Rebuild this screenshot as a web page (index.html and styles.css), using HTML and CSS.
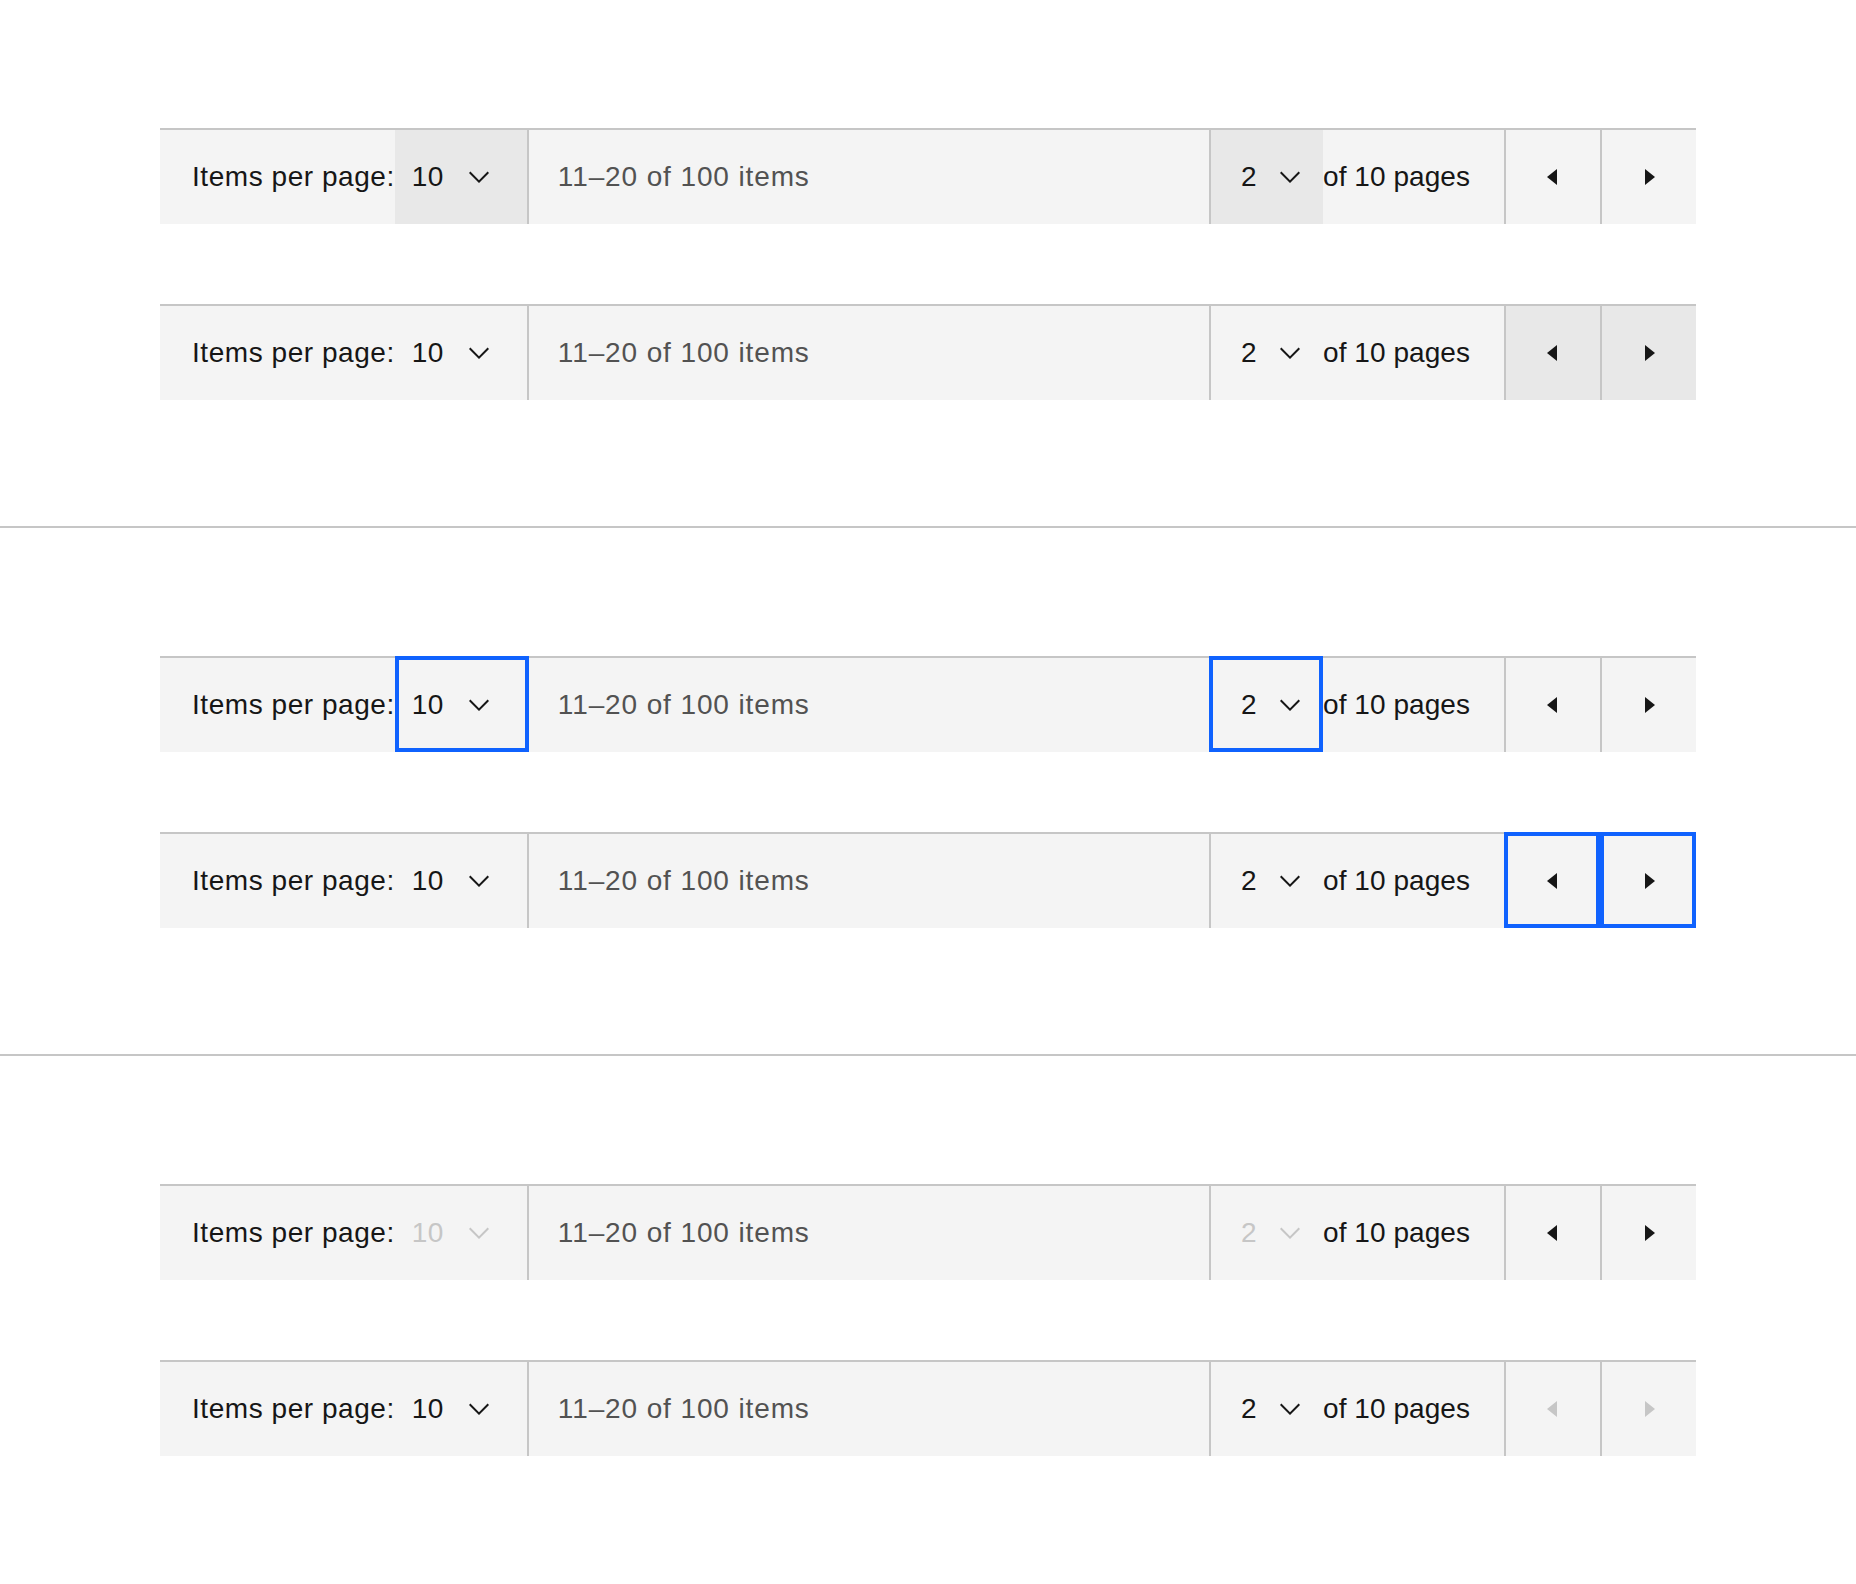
FILE: index.html
```html
<!DOCTYPE html>
<html lang="en">
<head>
<meta charset="utf-8">
<title>Pagination states</title>
<link rel="stylesheet" href="styles.css">
</head>
<body>
<svg width="0" height="0" class="defs" aria-hidden="true">
  <defs>
    <symbol id="chev" viewBox="0 0 16 16"><path d="M8 11L3 6 3.7 5.3 8 9.6 12.3 5.3 13 6z"/></symbol>
    <symbol id="caret-l" viewBox="0 0 16 16"><path d="M10 4L5 8 10 12z"/></symbol>
    <symbol id="caret-r" viewBox="0 0 16 16"><path d="M6 4L11 8 6 12z"/></symbol>
  </defs>
</svg>

<section class="group">
  <div class="pagination">
    <div class="pagination__left">
      <span class="label">Items per page:</span>
      <div class="select select--count is-hover"><span class="select__value">10</span><svg class="chevron"><use href="#chev"/></svg></div>
      <span class="range">11–20 of 100 items</span>
    </div>
    <div class="pagination__right">
      <div class="select select--page is-hover"><span class="select__value">2</span><svg class="chevron"><use href="#chev"/></svg></div>
      <span class="total">of 10 pages</span>
      <button class="nav"><svg class="caret"><use href="#caret-l"/></svg></button>
      <button class="nav"><svg class="caret"><use href="#caret-r"/></svg></button>
    </div>
  </div>

  <div class="pagination">
    <div class="pagination__left">
      <span class="label">Items per page:</span>
      <div class="select select--count"><span class="select__value">10</span><svg class="chevron"><use href="#chev"/></svg></div>
      <span class="range">11–20 of 100 items</span>
    </div>
    <div class="pagination__right">
      <div class="select select--page"><span class="select__value">2</span><svg class="chevron"><use href="#chev"/></svg></div>
      <span class="total">of 10 pages</span>
      <button class="nav is-hover"><svg class="caret"><use href="#caret-l"/></svg></button>
      <button class="nav is-hover"><svg class="caret"><use href="#caret-r"/></svg></button>
    </div>
  </div>
</section>

<section class="group">
  <div class="pagination">
    <div class="pagination__left">
      <span class="label">Items per page:</span>
      <div class="select select--count is-focus"><span class="select__value">10</span><svg class="chevron"><use href="#chev"/></svg></div>
      <span class="range">11–20 of 100 items</span>
    </div>
    <div class="pagination__right">
      <div class="select select--page is-focus"><span class="select__value">2</span><svg class="chevron"><use href="#chev"/></svg></div>
      <span class="total">of 10 pages</span>
      <button class="nav"><svg class="caret"><use href="#caret-l"/></svg></button>
      <button class="nav"><svg class="caret"><use href="#caret-r"/></svg></button>
    </div>
  </div>

  <div class="pagination">
    <div class="pagination__left">
      <span class="label">Items per page:</span>
      <div class="select select--count"><span class="select__value">10</span><svg class="chevron"><use href="#chev"/></svg></div>
      <span class="range">11–20 of 100 items</span>
    </div>
    <div class="pagination__right">
      <div class="select select--page"><span class="select__value">2</span><svg class="chevron"><use href="#chev"/></svg></div>
      <span class="total">of 10 pages</span>
      <button class="nav is-focus"><svg class="caret"><use href="#caret-l"/></svg></button>
      <button class="nav is-focus"><svg class="caret"><use href="#caret-r"/></svg></button>
    </div>
  </div>
</section>

<section class="group group--last">
  <div class="pagination">
    <div class="pagination__left">
      <span class="label">Items per page:</span>
      <div class="select select--count is-disabled"><span class="select__value">10</span><svg class="chevron"><use href="#chev"/></svg></div>
      <span class="range">11–20 of 100 items</span>
    </div>
    <div class="pagination__right">
      <div class="select select--page is-disabled"><span class="select__value">2</span><svg class="chevron"><use href="#chev"/></svg></div>
      <span class="total">of 10 pages</span>
      <button class="nav"><svg class="caret"><use href="#caret-l"/></svg></button>
      <button class="nav"><svg class="caret"><use href="#caret-r"/></svg></button>
    </div>
  </div>

  <div class="pagination">
    <div class="pagination__left">
      <span class="label">Items per page:</span>
      <div class="select select--count"><span class="select__value">10</span><svg class="chevron"><use href="#chev"/></svg></div>
      <span class="range">11–20 of 100 items</span>
    </div>
    <div class="pagination__right">
      <div class="select select--page"><span class="select__value">2</span><svg class="chevron"><use href="#chev"/></svg></div>
      <span class="total">of 10 pages</span>
      <button class="nav is-disabled"><svg class="caret"><use href="#caret-l"/></svg></button>
      <button class="nav is-disabled"><svg class="caret"><use href="#caret-r"/></svg></button>
    </div>
  </div>
</section>
</body>
</html>
```

FILE: styles.css
```css
* {
  box-sizing: border-box;
}

html, body {
  margin: 0;
  padding: 0;
  background: #ffffff;
}

body {
  width: 1856px;
  min-height: 1584px;
  font-family: "Liberation Sans", Arial, sans-serif;
  font-size: 28px;
  letter-spacing: 0.32px;
  color: #161616;
}

.defs {
  position: absolute;
  width: 0;
  height: 0;
  overflow: hidden;
}

.group {
  display: flex;
  flex-direction: column;
  gap: 80px;
  padding: 128px 0 126px 160px;
  border-bottom: 2px solid #c6c6c6;
}

.group--last {
  border-bottom: none;
  padding-bottom: 128px;
}

.pagination {
  display: flex;
  justify-content: space-between;
  width: 1536px;
  height: 96px;
  background: #f4f4f4;
  border-top: 2px solid #c6c6c6;
}

.pagination__left,
.pagination__right {
  display: flex;
  align-items: stretch;
  height: 100%;
}

.pagination__left {
  padding-left: 32px;
}

.label,
.range,
.total {
  display: flex;
  align-items: center;
  white-space: nowrap;
}

.label {
  letter-spacing: 0.55px;
}

.range {
  padding-left: 29px;
  color: #525252;
  letter-spacing: 0.88px;
}

.total {
  padding-right: 34px;
  letter-spacing: 0.05px;
}

.select {
  position: relative;
  display: flex;
  align-items: center;
  justify-content: space-between;
  color: #161616;
}

.select--count {
  width: 134px;
  padding: 0 32px 0 17px;
  border-right: 2px solid #c6c6c6;
}

.select--page {
  width: 114px;
  padding: 0 17px 0 30px;
  border-left: 2px solid #c6c6c6;
}

.chevron {
  width: 32px;
  height: 32px;
  fill: currentColor;
  flex: none;
}

.select.is-hover {
  background: #e8e8e8;
}

.select.is-disabled {
  color: #c6c6c6;
}

.nav {
  position: relative;
  display: flex;
  align-items: center;
  justify-content: center;
  width: 96px;
  height: 100%;
  margin: 0;
  padding: 0;
  border: none;
  border-left: 2px solid #c6c6c6;
  background: transparent;
  color: #161616;
  font: inherit;
}

.nav.is-hover {
  background: #e8e8e8;
}

.nav.is-disabled {
  color: #c6c6c6;
}

.caret {
  width: 32px;
  height: 32px;
  fill: currentColor;
}

.is-focus::after {
  content: "";
  position: absolute;
  top: -2px;
  bottom: 0;
  left: 0;
  right: 0;
  border: 4px solid #0f62fe;
  pointer-events: none;
}

.select--count.is-focus::after {
  right: -2px;
}

.select--page.is-focus::after,
.nav.is-focus::after {
  left: -2px;
}
```
